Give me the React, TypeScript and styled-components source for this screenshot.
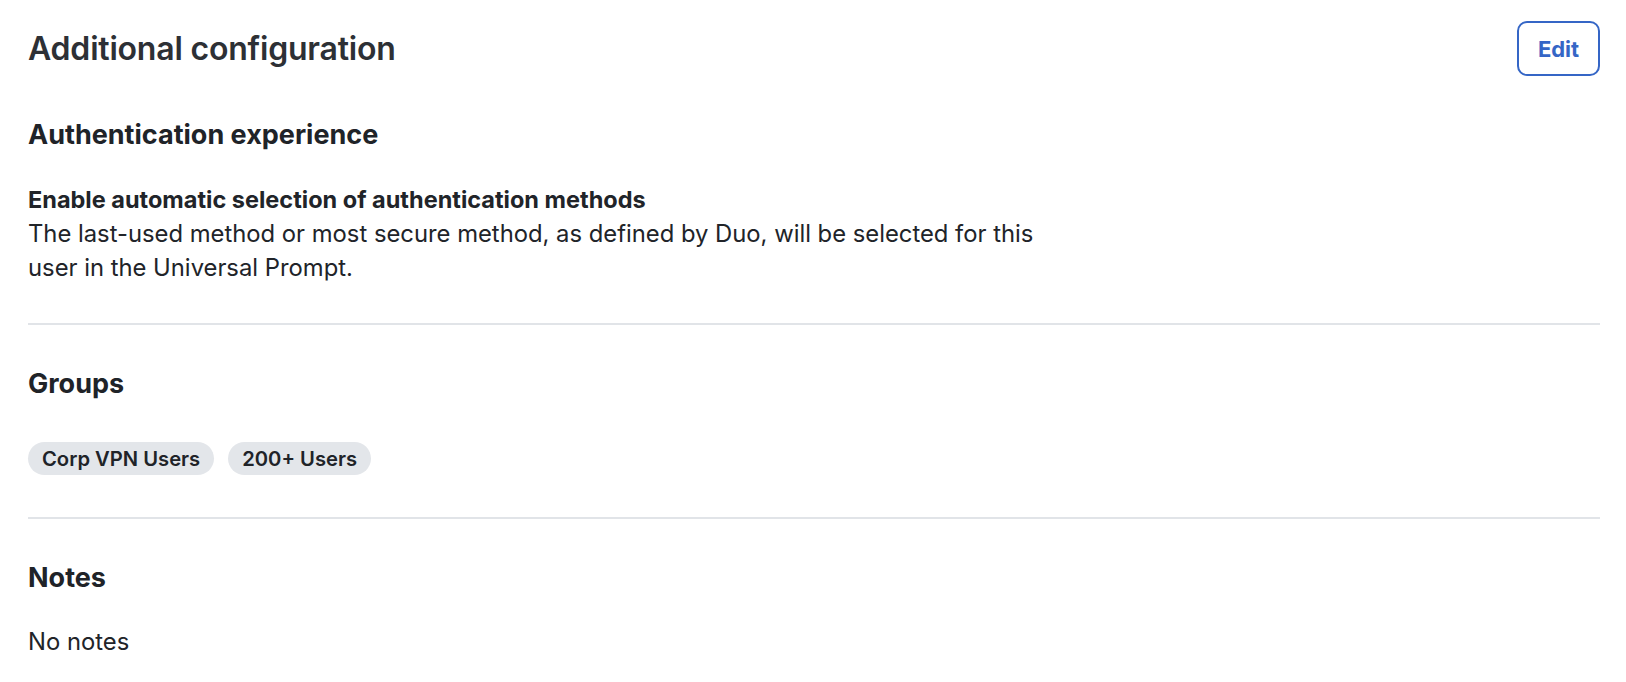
import styled, { createGlobalStyle } from "styled-components";

const GlobalStyle = createGlobalStyle`
  body {
    margin: 0;
    background: #ffffff;
    font-family: Inter, "Liberation Sans", sans-serif;
    color: #212429;
  }
`;

const Page = styled.div`
  padding: 21px 26px 0 28px;
`;

const Header = styled.div`
  display: flex;
  justify-content: space-between;
  align-items: center;
  height: 55px;
`;

const Title = styled.h1`
  margin: 0;
  font-size: 32px;
  font-weight: 600;
  color: #2d3035;
  letter-spacing: -0.2px;
`;

const EditButton = styled.button`
  width: 83px;
  height: 55px;
  border: 2.5px solid #3566c6;
  border-radius: 10px;
  background: #ffffff;
  color: #3566c6;
  font-family: Inter, "Liberation Sans", sans-serif;
  font-size: 22px;
  font-weight: 700;
  cursor: pointer;
`;

const Section = styled.section<{ $last?: boolean; $bottom?: number }>`
  padding: 43px 0 ${(p) => (p.$last ? 0 : p.$bottom ?? 40)}px;
  border-bottom: ${(p) => (p.$last ? "none" : "2px solid #e1e4e8")};
`;

const Heading = styled.h2<{ $gap: number }>`
  margin: 0 0 ${(p) => p.$gap}px;
  font-size: 27px;
  line-height: 32px;
  font-weight: 700;
  color: #202328;
`;

const Text = styled.p<{ $bold?: boolean }>`
  margin: 0;
  max-width: 1030px;
  font-size: ${(p) => (p.$bold ? 23.5 : 23.8)}px;
  line-height: 34px;
  font-weight: ${(p) => (p.$bold ? 700 : 400)};
`;

const Chips = styled.div`
  display: flex;
  gap: 14px;
`;

const Chip = styled.span`
  display: inline-flex;
  align-items: center;
  height: 33px;
  padding: 0 14px;
  border-radius: 17px;
  background: #e3e6ea;
  font-size: 20.2px;
  font-weight: 600;
  color: #202328;
`;

export default function App() {
  return (
    <Page>
      <GlobalStyle />
      <Header>
        <Title>Additional configuration</Title>
        <EditButton>Edit</EditButton>
      </Header>

      <Section $bottom={38}>
        <Heading $gap={32}>Authentication experience</Heading>
        <Text $bold>Enable automatic selection of authentication methods</Text>
        <Text>
          The last-used method or most secure method, as defined by Duo, will be selected for this
          user in the Universal Prompt.
        </Text>
      </Section>

      <Section $bottom={42}>
        <Heading $gap={42}>Groups</Heading>
        <Chips>
          <Chip>Corp VPN Users</Chip>
          <Chip>200+ Users</Chip>
        </Chips>
      </Section>

      <Section $last>
        <Heading $gap={31}>Notes</Heading>
        <Text>No notes</Text>
      </Section>
    </Page>
  );
}
